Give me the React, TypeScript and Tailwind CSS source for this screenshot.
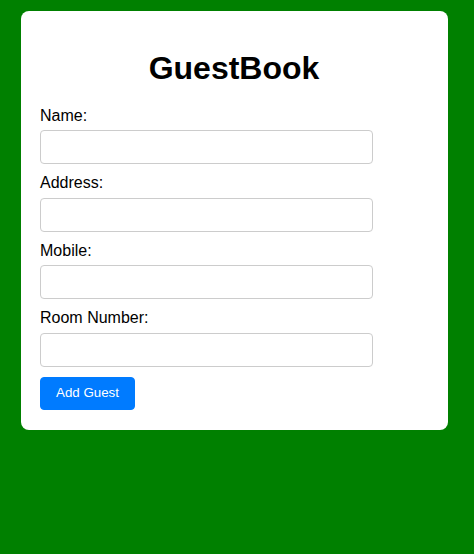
const fields = ["Name:", "Address:", "Mobile:", "Room Number:"];

export default function App() {
  return (
    <div
      className="min-h-screen bg-[#008000] pt-[11px]"
      style={{ fontFamily: '"Liberation Sans", Arial, sans-serif' }}
    >
      <div className="ml-[21px] w-[427px] rounded-lg bg-white py-5 pr-5 pl-[19px]">
        <h1 className="mt-[19px] mb-[20px] text-center text-[32px] leading-[37px] font-bold text-black">
          GuestBook
        </h1>

        <form onSubmit={(e) => e.preventDefault()}>
          {fields.map((label) => (
            <div key={label}>
              <label className="mb-[5px] block text-base leading-[18.4px] text-black">{label}</label>
              <input
                type="text"
                className="mb-[10px] block h-[34px] w-[333px] rounded border border-[#ccc] bg-white px-2 text-base outline-none"
              />
            </div>
          ))}
          <button
            type="submit"
            className="h-[33px] rounded border border-[#007bff] bg-[#007bff] px-[15px] text-[13.33px] text-white"
          >
            Add Guest
          </button>
        </form>
      </div>
    </div>
  );
}
